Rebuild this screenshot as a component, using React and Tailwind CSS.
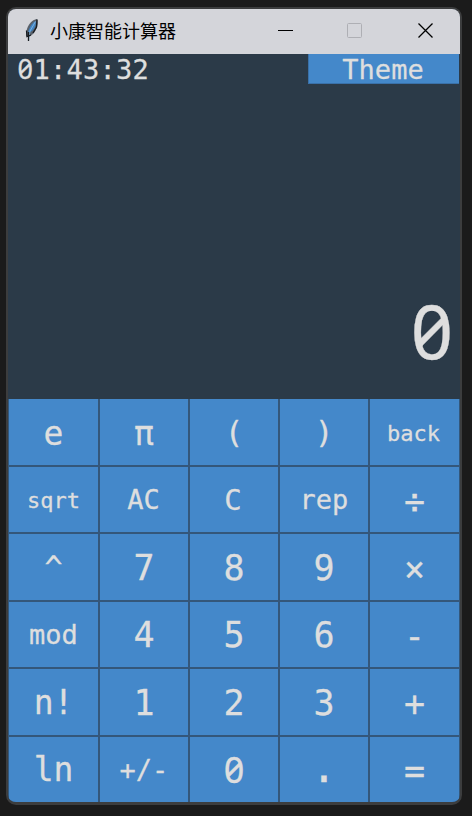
import React from "react";

const keys = [
  ["e", "text-[33px] pt-[2px]"],
  ["π", "text-[33px] pt-[2px]"],
  ["(", "text-[31px] pt-px"],
  [")", "text-[31px] pt-px"],
  ["back", "text-[22px] pt-[3px] pr-[2px]"],
  ["sqrt", "text-[22px] pt-[2px]"],
  ["AC", "text-[27px] pr-px"],
  ["C", "text-[29px] pt-[2px] pr-[2px]"],
  ["rep", "text-[27px]"],
  ["÷", "text-[35px] pt-[5px]"],
  ["^", "text-[30px] pt-[2px]"],
  ["7", "text-[35px] pt-[3px]"],
  ["8", "text-[35px] pt-[3px]"],
  ["9", "text-[35px] pt-[3px]"],
  ["×", "text-[35px] pt-[4px]"],
  ["mod", "text-[27px]"],
  ["4", "text-[35px] pt-[2px]"],
  ["5", "text-[35px] pt-[2px]"],
  ["6", "text-[35px] pt-[2px]"],
  ["-", "text-[35px] pt-[3px]"],
  ["n!", "text-[33px]"],
  ["1", "text-[35px] pt-[3px]"],
  ["2", "text-[35px] pt-[3px]"],
  ["3", "text-[35px] pt-[3px]"],
  ["+", "text-[35px] pt-[5px]"],
  ["ln", "text-[33px]"],
  ["+/-", "text-[27px]"],
  ["0", "text-[36px] font-['Noto_Sans'] [font-feature-settings:'zero']"],
  [".", "text-[42px] pb-[3px]"],
  ["=", "text-[35px] pt-[3px]"],
];

function Feather() {
  return (
    <svg width="16" height="26" viewBox="0 0 16 26" className="mb-[2px] shrink-0">
      <path d="M13 2C8 2.5 3.5 8 2.5 14L2 19L4.5 20.5L9 17C13 12.5 15 6 13 2Z" fill="#59616b" />
      <path d="M11.5 4C8 6 5 10.5 4 16.5L8.5 13.5C11.5 10 12.5 7 11.5 4Z" fill="#3f84c4" />
      <path d="M11.5 4.5L6 14L4.5 24" stroke="#8dbbe2" strokeWidth="0.8" fill="none" />
      <path d="M4.5 15V24M13 2.5L12.5 10L9 16M2.5 13.5L3 19.5L7 18" stroke="#171b20" strokeWidth="1.3" fill="none" />
    </svg>
  );
}

export default function App() {
  return (
    <div className="h-[816px] w-[472px] bg-[#1b1b1b] pl-[6px] pt-[7px]">
      <div className="flex h-[798px] w-[456px] flex-col overflow-hidden rounded-[10px] border-2 border-b-3 border-[#3c3d3e] bg-[#2b3a48] font-['DejaVu_Sans_Mono',monospace] text-[#dedede]">
        <header className="flex h-[45px] shrink-0 items-center bg-[#d4d5da] pb-[2px] pl-[16px] text-black">
          <Feather />
          <h1 className="mb-[2px] ml-[10px] w-[228px] font-['Noto_Sans_CJK_SC',sans-serif] text-[18px] font-normal leading-none">小康智能计算器</h1>
          <svg width="156" height="16" viewBox="0 0 156 16" fill="none" className="mb-px">
            <path d="M0 8.5H15" stroke="#000" />
            <rect x="69.5" y="1.5" width="14" height="14" rx="1" stroke="#aeafb4" />
            <path d="M140.5 1.5L154.5 15.5M154.5 1.5L140.5 15.5" stroke="#000" strokeWidth="1.3" />
          </svg>
        </header>
        <section className="flex h-[345px] shrink-0 flex-col justify-between [-webkit-text-stroke:0.3px_#dedede]">
          <div className="flex h-[30px] items-center justify-between pl-[9px] pr-px">
            <time className="flex items-start text-[27px] leading-none tracking-[0.25px]">
              <span className="w-[16.5px] text-center font-['Noto_Sans'] leading-[25px] [font-feature-settings:'zero']">0</span>1:43:32
            </time>
            <button className="h-[30px] w-[151px] border-b border-l border-[#3a71a9] bg-[#4488ca] pr-[2px] pt-px text-[27px] leading-none">Theme</button>
          </div>
          <output className="pb-[31px] pr-[7px] text-right font-['Noto_Sans'] text-[74px] leading-none [font-feature-settings:'zero']">0</output>
        </section>
        <main className="grid h-[404px] shrink-0 grid-cols-[89px_88px_88px_88px_89px] grid-rows-[66px_65px_66px_65px_66px_65px] gap-[2px] bg-[#34577a] pl-px [-webkit-text-stroke:0.3px_#dedede]">
          {keys.map(([label, style]) => (
            <button key={label} className={`flex items-center justify-center bg-[#4488ca] leading-none ${style}`}>
              {label}
            </button>
          ))}
        </main>
      </div>
    </div>
  );
}
